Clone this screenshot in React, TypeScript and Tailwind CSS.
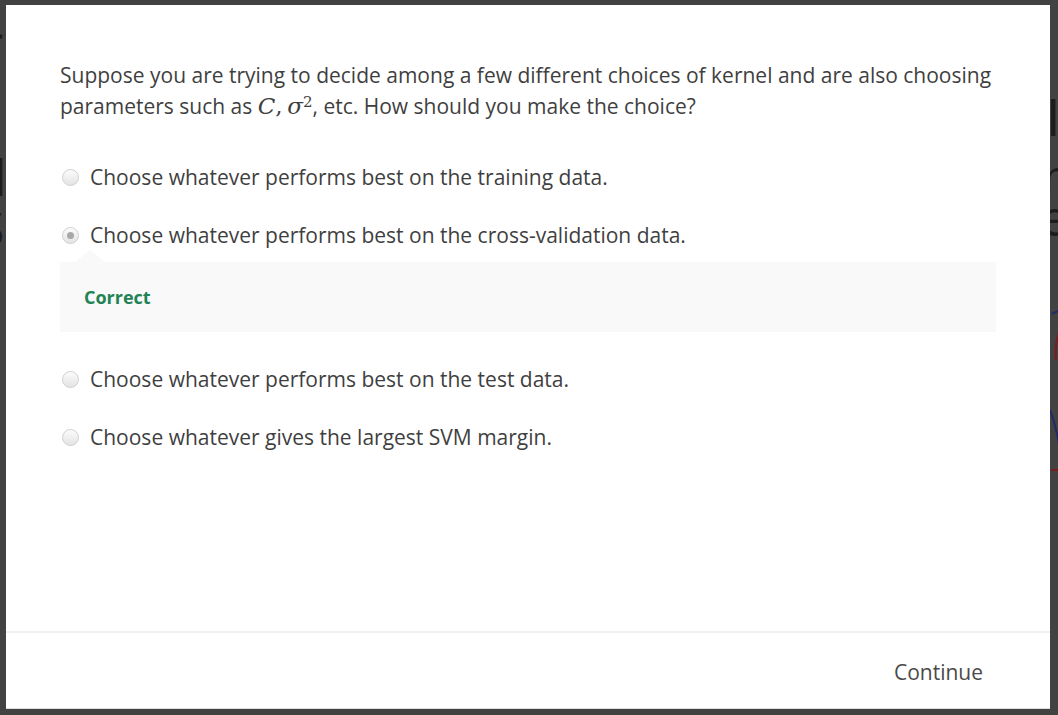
import React from "react";

function Radio({ checked }: { checked?: boolean }) {
  return (
    <span className="flex h-[17px] w-[17px] shrink-0 items-center justify-center rounded-full border border-[#d0d0d0] bg-gradient-to-b from-[#fbfbfb] to-[#e4e4e4]">
      {checked && <span className="h-[7px] w-[7px] rounded-full bg-[#a8a8a8]" />}
    </span>
  );
}

function Option({ children, checked }: { children: React.ReactNode; checked?: boolean }) {
  return (
    <div className="flex h-[30px] items-center gap-[11px] pl-[2px]">
      <Radio checked={checked} />
      <span className="text-[21px] leading-[30px] text-[#3f3f3f]">{children}</span>
    </div>
  );
}

export default function App() {
  return (
    <div
      className="relative h-[715px] w-[1058px] overflow-hidden bg-[#424242]"
      style={{ fontFamily: '"Open Sans", "Noto Sans", sans-serif' }}
    >
      {/* dimmed page behind the overlay */}
      <div className="absolute inset-0 text-[#1c1c1c]" aria-hidden="true">
        <span className="absolute left-[-18px] top-[16px] text-[52px] leading-none">r</span>
        <span className="absolute left-[-24px] top-[152px] text-[50px] leading-none">d</span>
        <span className="absolute left-[-22px] top-[204px] text-[48px] leading-none">S</span>
        <span className="absolute left-[1046px] top-[90px] text-[52px] leading-none">I</span>
        <span className="absolute left-[1042px] top-[152px] text-[48px] leading-none">n</span>
        <span className="absolute left-[1040px] top-[192px] text-[50px] leading-none">e</span>
        <svg className="absolute left-[1048px] top-[300px]" width="12" height="180" viewBox="0 0 12 180">
          <path d="M4 14 L12 10" stroke="#1f2a6b" strokeWidth="2" fill="none" />
          <path d="M12 30 Q6 45 8 60" stroke="#7a1c1c" strokeWidth="2" fill="none" />
          <path d="M12 70 L11 86" stroke="#5a1a1a" strokeWidth="2" fill="none" />
          <path d="M2 110 Q8 125 12 150" stroke="#1f2a6b" strokeWidth="2" fill="none" />
          <path d="M3 170 L12 170" stroke="#7a1c1c" strokeWidth="2" fill="none" />
        </svg>
      </div>

      {/* modal */}
      <div className="relative ml-[6px] mt-[5px] flex h-[704px] w-[1044px] flex-col border-b border-[#dcdcdc] bg-white">
        <div className="flex-1 pl-[54px] pr-[48px] pt-[55px]">
          <p className="text-[21px] leading-[31px] text-[#3f3f3f]">
            Suppose you are trying to decide among a few different choices of kernel and are also choosing
            parameters such as{" "}
            <span style={{ fontFamily: '"DejaVu Serif", "Liberation Serif", serif' }} className="text-[23px]">
              <i>C</i>,{"\u2009"}<i>σ</i>
              <sup className="text-[15px] not-italic">2</sup>
            </span>
            , etc. How should you make the choice?
          </p>

          <div className="mt-[40px]">
            <Option>Choose whatever performs best on the training data.</Option>
            <div className="mt-[28px]">
              <Option checked>Choose whatever performs best on the cross-validation data.</Option>
            </div>
            <div className="w-[936px]">
              <div className="ml-[15px] h-0 w-0 border-x-[15px] border-b-[12px] border-x-transparent border-b-[#f9f9f9]" />
              <div className="flex h-[70px] items-center bg-[#f9f9f9] pl-[24px]">
                <span className="text-[18px] font-bold text-[#1f8354]">Correct</span>
              </div>
            </div>
            <div className="mt-[32px]">
              <Option>Choose whatever performs best on the test data.</Option>
            </div>
            <div className="mt-[28px]">
              <Option>Choose whatever gives the largest SVM margin.</Option>
            </div>
          </div>
        </div>

        <div className="flex h-[77px] items-center justify-end border-t-2 border-[#efefef] pr-[67px]">
          <span className="pt-[4px] text-[21px] text-[#4a4a4a]">Continue</span>
        </div>
      </div>
    </div>
  );
}
